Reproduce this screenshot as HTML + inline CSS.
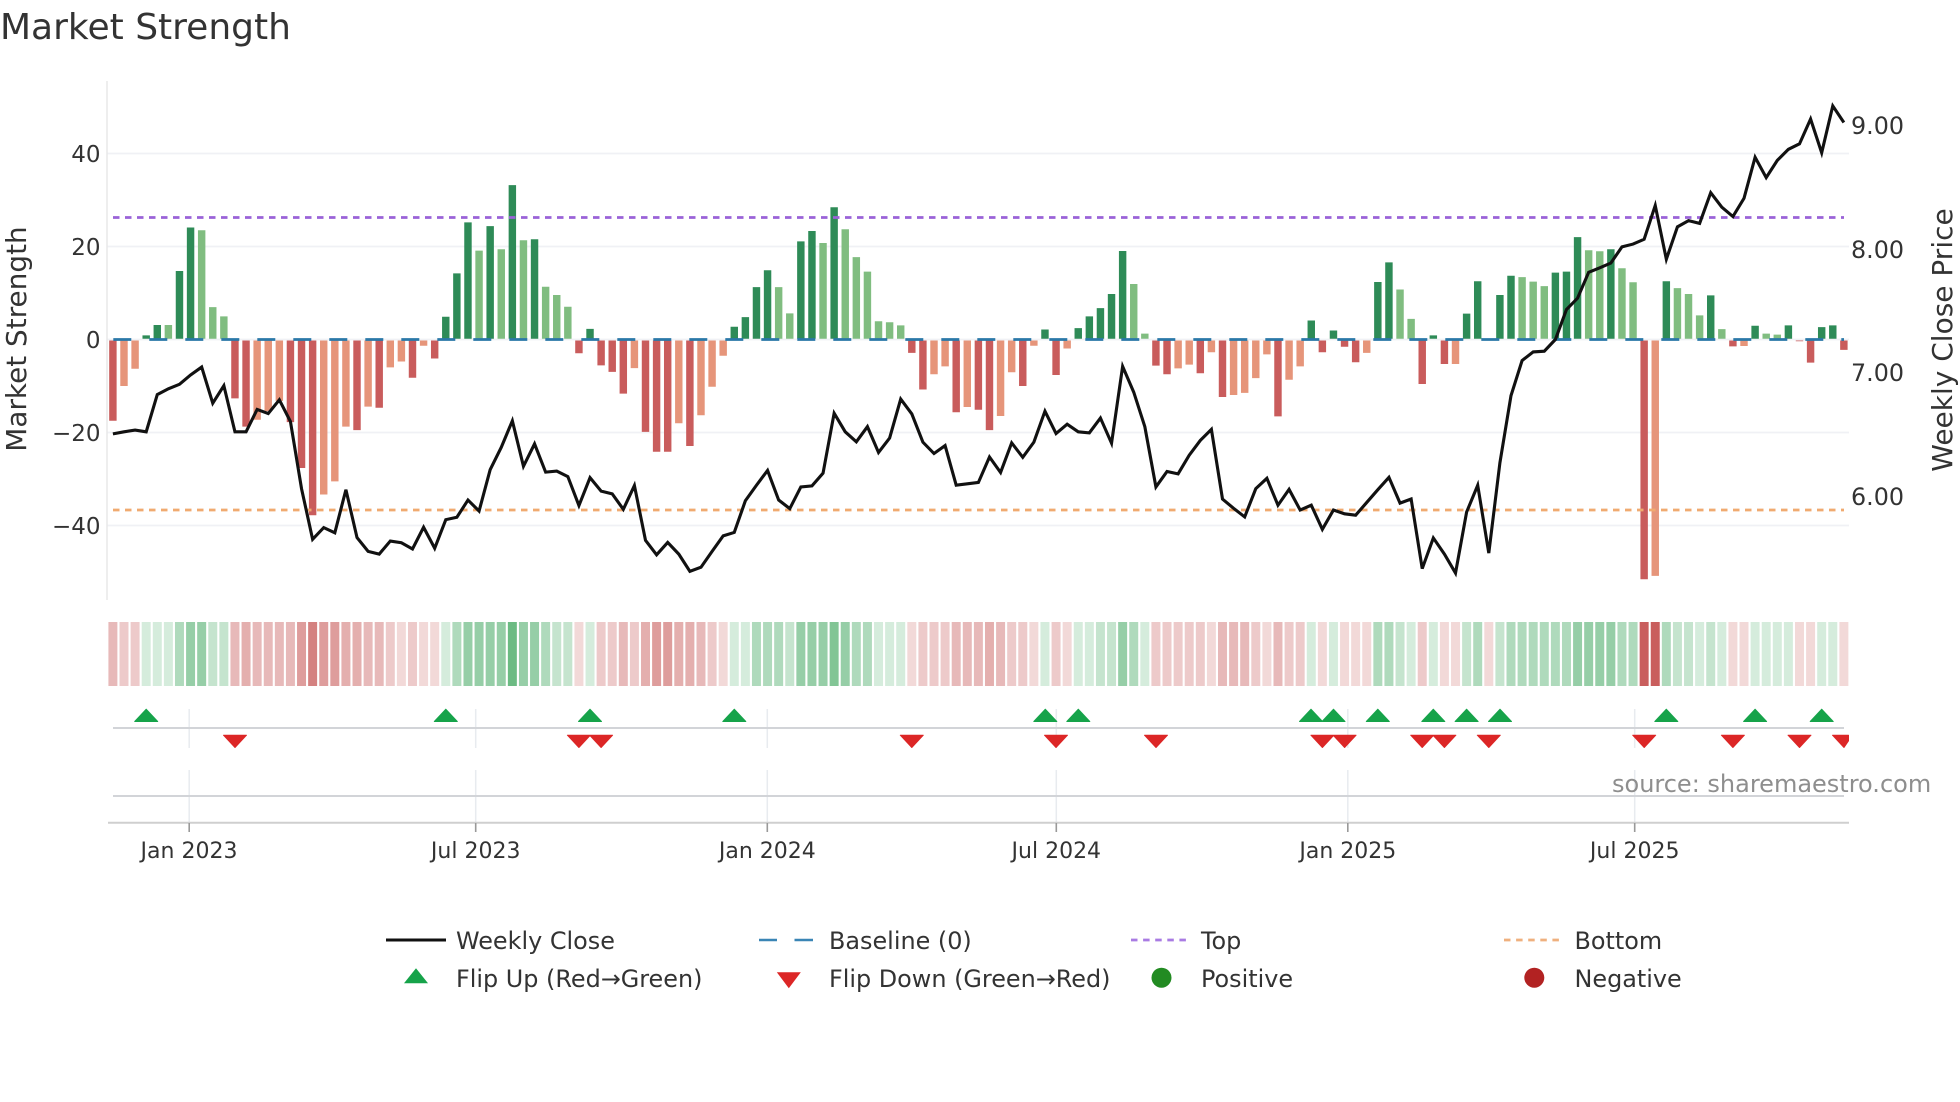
<!DOCTYPE html>
<html lang="en">
<head>
<meta charset="utf-8">
<title>Market Strength</title>
<style>
html,body{margin:0;padding:0;background:#fff;width:1960px;height:1102px;overflow:hidden}
svg{display:block}
text{font-family:"DejaVu Sans","Liberation Sans",sans-serif;fill:#333}
</style>
</head>
<body>
<svg width="1960" height="1102" viewBox="0 0 1960 1102" xmlns="http://www.w3.org/2000/svg">
<rect width="1960" height="1102" fill="#fff"/>
<text x="0" y="39" font-size="36">Market Strength</text>

<!-- grid -->
<path d="M107 153.5H1849M107 246.5H1849M107 339.5H1849M107 432.5H1849M107 525.5H1849" stroke="#f0f1f5" stroke-width="1.8" fill="none"/>
<path d="M107 81V600" stroke="#e9e9e9" stroke-width="1.6" fill="none"/>

<!-- bars -->
<g transform="matrix(11.096 0 0 .3445 112.9 70.1)" fill="none" stroke-width=".67">
<path stroke="#c95c5c" d="M0 785V1018M11 785V953M12 785V1035M16 785V1022M17 785V1155M18 785V1292M22 785V1045M24 785V980M27 785V893M29 785V837M42 785V822M44 785V857M45 785V876M46 785V939M48 785V1050M49 785V1108M50 785V1108M52 785V1091M72 785V821M73 785V927M76 785V993M78 785V986M79 785V1045M82 785V917M85 785V885M94 785V858M95 785V883M98 785V880M100 785V949M105 785V1005M109 785V819M111 785V803M112 785V848M118 785V911M120 785V853M138 785V1478M146 785V802M152 785V787M153 785V849M156 785V812"/>
<path stroke="#e6957a" d="M1 785V917M2 785V867M13 785V1015M14 785V990M15 785V960M19 785V1232M20 785V1194M21 785V1035M23 785V977M25 785V863M26 785V846M28 785V800M47 785V865M51 785V1025M53 785V1002M54 785V919M55 785V829M74 785V883M75 785V860M77 785V978M80 785V1004M81 785V877M83 785V800M86 785V808M96 785V866M97 785V855M99 785V819M101 785V943M102 785V937M103 785V894M104 785V825M106 785V899M107 785V860M113 785V821M121 785V853M139 785V1468M147 785V801"/>
<path stroke="#2e8b57" d="M3 780V770M4 780V740M6 780V583M7 780V457M30 780V716M31 780V590M32 780V442M34 780V453M36 780V334M38 780V491M43 780V751M56 780V745M57 780V717M58 780V630M59 780V581M62 780V497M63 780V467M65 780V398M84 780V753M87 780V749M88 780V715M89 780V691M90 780V650M91 780V525M108 780V727M110 780V756M114 780V615M115 780V558M119 780V770M122 780V707M123 780V613M125 780V653M126 780V597M130 780V588M131 780V585M132 780V485M135 780V520M140 780V613M144 780V654M148 780V742M151 780V741M154 780V746M155 780V741"/>
<path stroke="#80bd80" d="M5 780V740M8 780V465M9 780V688M10 780V715M33 780V524M35 780V520M37 780V494M39 780V629M40 780V653M41 780V687M60 780V630M61 780V706M64 780V502M66 780V462M67 780V543M68 780V585M69 780V729M70 780V732M71 780V741M92 780V621M93 780V765M116 780V637M117 780V722M127 780V601M128 780V614M129 780V627M133 780V523M134 780V526M136 780V575M137 780V616M141 780V633M142 780V650M143 780V712M145 780V752M149 780V765M150 780V768"/>
</g>

<!-- threshold lines -->
<path d="M113 217.5H1844" stroke="#9a62d8" stroke-width="2.8" stroke-dasharray="6.5 5.5" fill="none"/>
<path d="M113 510H1844" stroke="#f0aa70" stroke-width="2.8" stroke-dasharray="6.5 5.5" fill="none"/>
<path d="M113.3 339.5H1844" stroke="#2a78a8" stroke-width="2.8" stroke-dasharray="18 18" fill="none"/>

<!-- weekly close -->
<g transform="matrix(11.096 0 0 .3445 112.9 70.1)">
<polyline fill="none" stroke="#111" stroke-width="3.1" stroke-linejoin="miter" vector-effect="non-scaling-stroke" points="0,1056 1,1050 2,1045 3,1050 4,942 5,925 6,912 7,885 8,862 9,967 10,916 11,1050 12,1050 13,985 14,997 15,957 16,1020 17,1215 18,1362 19,1328 20,1343 21,1218 22,1357 23,1397 24,1405 25,1367 26,1372 27,1390 28,1327 29,1388 30,1305 31,1298 32,1248 33,1280 34,1160 35,1095 36,1018 37,1150 38,1085 39,1167 40,1164 41,1180 42,1264 43,1183 44,1222 45,1230 46,1275 47,1206 48,1365 49,1407 50,1371 51,1405 52,1455 53,1443 54,1397 55,1352 56,1342 57,1250 58,1205 59,1162 60,1248 61,1273 62,1210 63,1207 64,1170 65,996 66,1050 67,1079 68,1035 69,1110 70,1068 71,955 72,998 73,1080 74,1113 75,1090 76,1205 77,1201 78,1197 79,1123 80,1168 81,1082 82,1124 83,1080 84,990 85,1055 86,1028 87,1050 88,1053 89,1010 90,1083 91,860 92,935 93,1035 94,1210 95,1165 96,1172 97,1118 98,1075 99,1043 100,1245 101,1272 102,1297 103,1215 104,1185 105,1263 106,1217 107,1277 108,1263 109,1333 110,1277 111,1288 112,1292 113,1255 114,1218 115,1182 116,1257 117,1245 118,1447 119,1358 120,1405 121,1460 122,1283 123,1205 124,1402 125,1140 126,945 127,843 128,818 129,816 130,782 131,695 132,662 133,587 134,574 135,560 136,513 137,505 138,491 139,393 140,549 141,455 142,437 143,445 144,356 145,398 146,425 147,372 148,253 149,312 150,262 151,230 152,214 153,142 154,240 155,104 156,152"/>
</g>

<!-- y tick labels -->
<g font-size="23" text-anchor="end">
<text x="100.5" y="162">40</text>
<text x="100.5" y="255">20</text>
<text x="100.5" y="348">0</text>
<text x="100.5" y="441">−20</text>
<text x="100.5" y="534">−40</text>
</g>
<g font-size="23.8">
<text x="1851" y="134">9.00</text>
<text x="1851" y="258">8.00</text>
<text x="1851" y="381">7.00</text>
<text x="1851" y="505">6.00</text>
</g>
<text font-size="27.9" text-anchor="middle" transform="translate(26 339) rotate(-90)">Market Strength</text>
<text font-size="28" text-anchor="middle" transform="translate(1952 340) rotate(-90)">Weekly Close Price</text>

<!-- heat strip -->
<g transform="translate(112.9 622) scale(11.096 1)" fill="none" stroke-width=".81">
<g stroke="#c4504f">
<path stroke-opacity=".22" d="M26 0v64M28 0v64M29 0v64M42 0v64M55 0v64M72 0v64M83 0v64M86 0v64M99 0v64M104 0v64M109 0v64M111 0v64M112 0v64M113 0v64M120 0v64M121 0v64M124 0v64M146 0v64M147 0v64M152 0v64M153 0v64M156 0v64"/>
<path stroke-opacity=".3" d="M1 0v64M2 0v64M25 0v64M27 0v64M44 0v64M45 0v64M47 0v64M54 0v64M73 0v64M74 0v64M75 0v64M81 0v64M82 0v64M85 0v64M94 0v64M95 0v64M96 0v64M97 0v64M98 0v64M103 0v64M106 0v64M107 0v64M118 0v64"/>
<path stroke-opacity=".4" d="M0 0v64M11 0v64M13 0v64M14 0v64M15 0v64M16 0v64M23 0v64M24 0v64M46 0v64M53 0v64M76 0v64M77 0v64M78 0v64M80 0v64M100 0v64M101 0v64M102 0v64M105 0v64"/>
<path stroke-opacity=".46" d="M12 0v64M21 0v64M22 0v64M48 0v64M51 0v64M52 0v64M79 0v64"/>
<path stroke-opacity=".56" d="M17 0v64M19 0v64M20 0v64M49 0v64M50 0v64"/>
<path stroke-opacity=".72" d="M18 0v64"/>
<path stroke-opacity=".92" d="M138 0v64M139 0v64"/>
</g>
<g stroke="#2e9e4f">
<path stroke-opacity=".2" d="M3 0v64M4 0v64M5 0v64M30 0v64M43 0v64M56 0v64M57 0v64M69 0v64M70 0v64M71 0v64M84 0v64M87 0v64M88 0v64M93 0v64M108 0v64M110 0v64M117 0v64M119 0v64M143 0v64M145 0v64M148 0v64M149 0v64M150 0v64M151 0v64M154 0v64M155 0v64"/>
<path stroke-opacity=".28" d="M9 0v64M10 0v64M40 0v64M41 0v64M61 0v64M89 0v64M90 0v64M116 0v64M122 0v64M125 0v64M141 0v64M142 0v64M144 0v64"/>
<path stroke-opacity=".38" d="M6 0v64M31 0v64M39 0v64M58 0v64M59 0v64M60 0v64M67 0v64M68 0v64M92 0v64M114 0v64M115 0v64M123 0v64M126 0v64M127 0v64M128 0v64M129 0v64M130 0v64M131 0v64M136 0v64M137 0v64M140 0v64"/>
<path stroke-opacity=".5" d="M7 0v64M8 0v64M32 0v64M33 0v64M34 0v64M35 0v64M37 0v64M38 0v64M62 0v64M63 0v64M64 0v64M66 0v64M91 0v64M132 0v64M133 0v64M134 0v64M135 0v64"/>
<path stroke-opacity=".6" d="M65 0v64"/>
<path stroke-opacity=".7" d="M36 0v64"/>
</g>
</g>

<!-- lower panels -->
<path d="M189.2 709V748M475.7 709V748M767.3 709V748M1056.3 709V748M1347.8 709V748M1634.7 709V748M189.2 770V822M475.7 770V822M767.3 770V822M1056.3 770V822M1347.8 770V822M1634.7 770V822" stroke="#e8ebef" stroke-width="1.5" fill="none"/>
<path d="M113 728H1844M113 796H1844" stroke="#d2d4d8" stroke-width="2" fill="none"/>
<path d="M108 822.7H1849" stroke="#cfcfcf" stroke-width="2" fill="none"/>
<path d="M189.2 823V832M475.7 823V832M767.3 823V832M1056.3 823V832M1347.8 823V832M1634.7 823V832" stroke="#999" stroke-width="1.6" fill="none"/>

<g stroke-width="1" stroke-linejoin="round">
<path fill="#16a34a" stroke="#16a34a" d="M146.2 709.2l11.5 12.3h-23zM445.8 709.2l11.5 12.3h-23zM590 709.2l11.5 12.3h-23zM734.3 709.2l11.5 12.3h-23zM1045.3 709.2l11.5 12.3h-23zM1078.3 709.2l11.5 12.3h-23zM1311 709.2l11.5 12.3h-23zM1333.5 709.2l11.5 12.3h-23zM1377.8 709.2l11.5 12.3h-23zM1433.3 709.2l11.5 12.3h-23zM1466.6 709.2l11.5 12.3h-23zM1500 709.2l11.5 12.3h-23zM1666.3 709.2l11.5 12.3h-23zM1755.1 709.2l11.5 12.3h-23zM1821.7 709.2l11.5 12.3h-23z"/>
<path fill="#dc2626" stroke="#dc2626" d="M235 747.5l-11.5-12.3h23zM578.9 747.5l-11.5-12.3h23zM601.1 747.5l-11.5-12.3h23zM911.8 747.5l-11.5-12.3h23zM1056 747.5l-11.5-12.3h23zM1156 747.5l-11.5-12.3h23zM1322.4 747.5l-11.5-12.3h23zM1344.6 747.5l-11.5-12.3h23zM1422.2 747.5l-11.5-12.3h23zM1444.4 747.5l-11.5-12.3h23zM1488.8 747.5l-11.5-12.3h23zM1644.2 747.5l-11.5-12.3h23zM1732.9 747.5l-11.5-12.3h23zM1799.5 747.5l-11.5-12.3h23zM1844 747.5l-11.5-12.3h16v5.6z"/>
</g>

<g font-size="22" text-anchor="middle">
<text x="189" y="858">Jan 2023</text>
<text x="475.7" y="858">Jul 2023</text>
<text x="767.3" y="858">Jan 2024</text>
<text x="1056.3" y="858">Jul 2024</text>
<text x="1347.8" y="858">Jan 2025</text>
<text x="1634.7" y="858">Jul 2025</text>
</g>
<text x="1612" y="792" font-size="24" style="fill:#8e8e8e">source: sharemaestro.com</text>

<!-- legend -->
<path d="M386 940H446" stroke="#111" stroke-width="3" fill="none"/>
<path d="M759 940H777M794.5 940H813" stroke="#3a85b5" stroke-width="2.6" fill="none"/>
<path d="M1131 940H1186.5" stroke="#a97be3" stroke-width="2.8" stroke-dasharray="6.5 5.6" fill="none"/>
<path d="M1504 940H1559" stroke="#efb07e" stroke-width="2.8" stroke-dasharray="6.5 5.6" fill="none"/>
<path fill="#16a34a" d="M416 968.3l12 15h-24z"/>
<path fill="#dc2626" d="M788.8 988.3l-12-16h24z"/>
<circle cx="1161.5" cy="977.7" r="10" fill="#228b22"/>
<circle cx="1534.3" cy="977.7" r="10" fill="#b22222"/>
<g font-size="23.9">
<text x="456" y="949">Weekly Close</text>
<text x="829" y="949">Baseline (0)</text>
<text x="1201" y="949">Top</text>
<text x="1574.5" y="949">Bottom</text>
<text x="456" y="987">Flip Up (Red→Green)</text>
<text x="829" y="987">Flip Down (Green→Red)</text>
<text x="1201" y="987">Positive</text>
<text x="1574.5" y="987">Negative</text>
</g>
</svg>
</body>
</html>
